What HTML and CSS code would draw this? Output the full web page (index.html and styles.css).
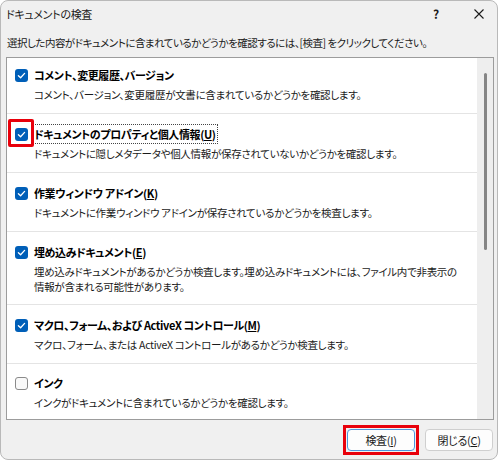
FILE: index.html
```html
<!DOCTYPE html>
<html lang="ja">
<head>
<meta charset="utf-8">
<title>ドキュメントの検査</title>
<link rel="stylesheet" href="styles.css">
</head>
<body>
<div class="dialog">
  <div class="titlebar">
    <span class="title">ドキュメントの検査</span>
    <span class="help">?</span>
    <span class="close"><svg width="10" height="10" viewBox="0 0 10 10"><path d="M0.5 0.5 L9.5 9.5 M9.5 0.5 L0.5 9.5" stroke="#1a1a1a" stroke-width="1.1" fill="none"/></svg></span>
  </div>
  <p class="intro">選択した内容がドキュメントに含まれているかどうかを確認するには、[検査] をクリックしてください。</p>
  <div class="panel">
    <div class="list">
      <div class="item">
        <div class="head"><span class="cb checked"><svg width="13" height="13" viewBox="0 0 13 13"><path d="M3.4 6.7 L5.6 8.8 L9.6 4.4" stroke="#fff" stroke-width="1.3" fill="none" stroke-linecap="round" stroke-linejoin="round"/></svg></span><span class="label">コメント、変更履歴、バージョン</span></div>
        <div class="desc">コメント、バージョン、変更履歴が文書に含まれているかどうかを確認します。</div>
      </div>
      <div class="item">
        <span class="mark"></span>
        <div class="head"><span class="cb checked"><svg width="13" height="13" viewBox="0 0 13 13"><path d="M3.4 6.7 L5.6 8.8 L9.6 4.4" stroke="#fff" stroke-width="1.3" fill="none" stroke-linecap="round" stroke-linejoin="round"/></svg></span><span class="label focus">ドキュメントのプロパティと個人情報(<u>U</u>)</span></div>
        <div class="desc">ドキュメントに隠しメタデータや個人情報が保存されていないかどうかを確認します。</div>
      </div>
      <div class="item">
        <div class="head"><span class="cb checked"><svg width="13" height="13" viewBox="0 0 13 13"><path d="M3.4 6.7 L5.6 8.8 L9.6 4.4" stroke="#fff" stroke-width="1.3" fill="none" stroke-linecap="round" stroke-linejoin="round"/></svg></span><span class="label">作業ウィンドウ アドイン(<u>K</u>)</span></div>
        <div class="desc">ドキュメントに作業ウィンドウ アドインが保存されているかどうかを検査します。</div>
      </div>
      <div class="item two-line">
        <div class="head"><span class="cb checked"><svg width="13" height="13" viewBox="0 0 13 13"><path d="M3.4 6.7 L5.6 8.8 L9.6 4.4" stroke="#fff" stroke-width="1.3" fill="none" stroke-linecap="round" stroke-linejoin="round"/></svg></span><span class="label">埋め込みドキュメント(<u>E</u>)</span></div>
        <div class="desc">埋め込みドキュメントがあるかどうか検査します。埋め込みドキュメントには、ファイル内で非表示の<br>情報が含まれる可能性があります。</div>
      </div>
      <div class="item">
        <div class="head"><span class="cb checked"><svg width="13" height="13" viewBox="0 0 13 13"><path d="M3.4 6.7 L5.6 8.8 L9.6 4.4" stroke="#fff" stroke-width="1.3" fill="none" stroke-linecap="round" stroke-linejoin="round"/></svg></span><span class="label">マクロ、フォーム、および ActiveX コントロール(<u>M</u>)</span></div>
        <div class="desc">マクロ、フォーム、または ActiveX コントロールがあるかどうか検査します。</div>
      </div>
      <div class="item">
        <div class="head"><span class="cb"></span><span class="label">インク</span></div>
        <div class="desc">インクがドキュメントに含まれているかどうかを確認します。</div>
      </div>
    </div>
    <div class="scrollbar"><div class="thumb"></div></div>
  </div>
  <div class="buttons">
    <span class="btn-wrap"><button class="btn primary">検査(<u>I</u>)</button></span>
    <button class="btn">閉じる(<u>C</u>)</button>
  </div>
</div>
</body>
</html>
```
FILE: styles.css
```css
* { box-sizing: border-box; }
html, body { margin: 0; padding: 0; background: #ffffff; }
body {
  font-family: "Noto Sans CJK JP", "Noto Sans", sans-serif;
  font-size: 11px;
  font-feature-settings: "palt";
  letter-spacing: -0.3px;
  color: #1a1a1a;
}
.dialog {
  width: 498px;
  height: 460px;
  border: 1px solid #b9b9b9;
  border-radius: 8px;
  background: #f0f0f0;
  display: flex;
  flex-direction: column;
  overflow: hidden;
}
.titlebar {
  height: 26px;
  display: flex;
  align-items: center;
  padding-left: 5px;
}
.title { flex: 1; line-height: 16px; }
.help {
  width: 22px;
  text-align: center;
  font-size: 12px;
  font-weight: 600;
  margin-right: 14px;
  line-height: 16px;
}
.close {
  width: 36px;
  display: flex;
  justify-content: center;
  align-items: center;
}
.intro {
  margin: 8px 0 0 0;
  padding-left: 6px;
  line-height: 16px;
  font-size: 10.5px;
  letter-spacing: -0.5px;
  white-space: nowrap;
}
.panel {
  margin: 6px 3px 0 5px;
  height: 363px;
  border: 1px solid #9c9c9c;
  background: #ffffff;
  display: flex;
}
.list { flex: 1; overflow: hidden; }
.item {
  position: relative;
  padding: 10px 8px 11px 8px;
  border-bottom: 1px solid #e4e4e4;
}
.item:first-child { padding-top: 7px; }
.item.two-line { padding-bottom: 10px; }
.item:last-child { border-bottom: none; padding-top: 9px; }
.head {
  display: flex;
  align-items: center;
  height: 20px;
  gap: 6px;
}
.cb {
  width: 13px;
  height: 13px;
  border-radius: 3px;
  border: 1px solid #8a8a8a;
  background: #f9f9f9;
  flex: none;
  display: flex;
}
.cb.checked { border: none; background: #005fb8; }
.label {
  font-weight: 700;
  color: #000;
  white-space: nowrap;
  line-height: 18px;
  letter-spacing: -0.4px;
}
.label.focus { outline: 1px dotted #444; padding: 0 1px; margin-left: -1px; }
.desc {
  margin-top: 2px;
  line-height: 15px;
  padding-left: 19px;
  font-size: 10.5px;
  letter-spacing: -0.3px;
  white-space: nowrap;
}
.mark {
  position: absolute;
  left: 1px;
  top: 5px;
  width: 26px;
  height: 28px;
  border: 3px solid #e8000b;
  border-radius: 2px;
}
.scrollbar {
  width: 16px;
  background: #eeeeee;
  padding-top: 15px;
  display: flex;
  justify-content: center;
}
.thumb {
  width: 3px;
  height: 177px;
  border-radius: 2px;
  background: #858585;
}
.buttons {
  display: flex;
  justify-content: flex-end;
  align-items: center;
  gap: 6px;
  margin-top: 5px;
  padding-right: 4px;
}
.btn-wrap {
  display: flex;
  border: 3px solid #e8000b;
  padding: 1px;
}
.btn {
  width: 68px;
  height: 22px;
  border: 1px solid #cfcfcf;
  border-radius: 4px;
  background: #fdfdfd;
  font: inherit;
  letter-spacing: inherit;
  font-feature-settings: inherit;
  color: #1a1a1a;
  padding: 0;
  line-height: 18px;
}
.btn.primary { border-color: #4d95dc; }
```
